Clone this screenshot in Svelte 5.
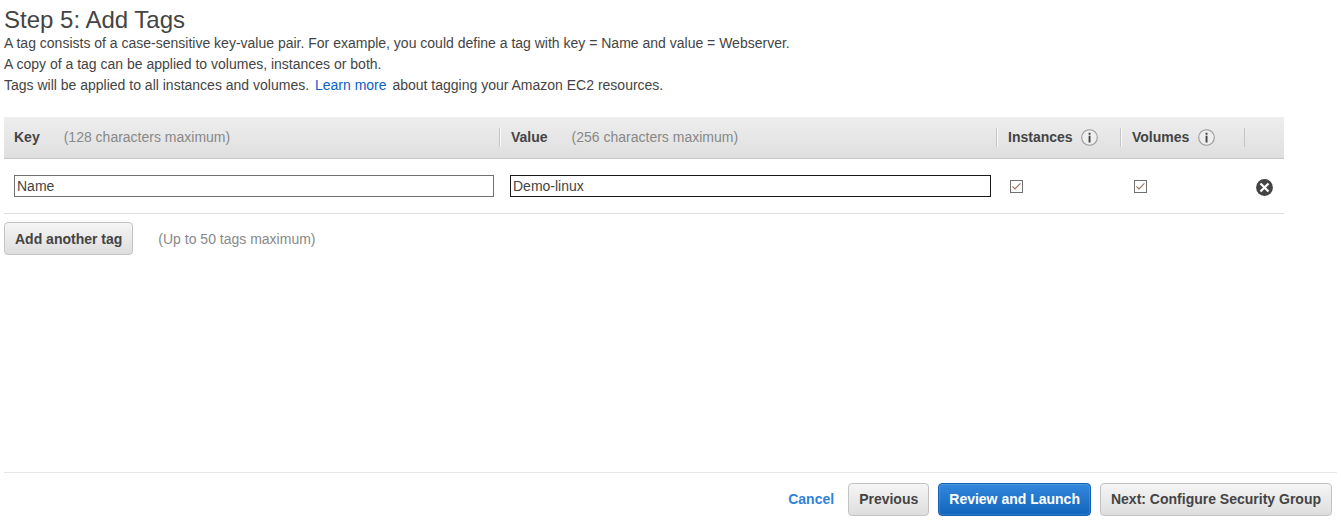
<script>
  let tags = $state([{ key: 'Name', value: 'Demo-linux', instances: true, volumes: true }]);
  const addTag = () => tags.push({ key: '', value: '', instances: true, volumes: true });
  const removeTag = (index) => tags.splice(index, 1);
</script>

{#snippet info()}
  <svg class="info" width="17" height="17" viewBox="0 0 17 17" aria-hidden="true">
    <circle cx="8.5" cy="8.5" r="7.8" fill="#eee" stroke="#999" stroke-width="1.1" />
    <path d="M7.6 3.8h1.9v1.9h-1.9zM7.6 6.8h1.9v6.6h-1.9z" fill="#444" />
  </svg>
{/snippet}

{#snippet check(tag, field)}
  <button
    class="check"
    role="checkbox"
    aria-checked={tag[field]}
    aria-label={field}
    onclick={() => (tag[field] = !tag[field])}
  >
    {#if tag[field]}
      <svg width="11" height="11" viewBox="0 0 11 11" aria-hidden="true">
        <path d="M1.4 5.3 4 7.9 9.4 2.3" fill="none" stroke="#96705f" stroke-width="1.1" />
      </svg>
    {/if}
  </button>
{/snippet}

<div class="page">
  <main>
    <h1>Step 5: Add Tags</h1>
    <div class="intro">
      <p>A tag consists of a case-sensitive key-value pair. For example, you could define a tag with key = Name and value = Webserver.</p>
      <p>A copy of a tag can be applied to volumes, instances or both.</p>
      <p>Tags will be applied to all instances and volumes. <a href="#learn">Learn more</a> about tagging your Amazon EC2 resources.</p>
    </div>

    <div class="table">
      <div class="grid head">
        <div class="cell"><b>Key</b><span class="hint">(128 characters maximum)</span></div>
        <div class="cell"><b>Value</b><span class="hint">(256 characters maximum)</span></div>
        <div class="cell"><b>Instances</b>{@render info()}</div>
        <div class="cell"><b>Volumes</b>{@render info()}</div>
        <div class="cell last"></div>
      </div>
      {#each tags as tag, i}
        <div class="grid row">
          <input aria-label="Key" bind:value={tag.key} />
          <input class="active" aria-label="Value" bind:value={tag.value} />
          {@render check(tag, 'instances')}
          {@render check(tag, 'volumes')}
          <button class="remove" aria-label="Remove tag" onclick={() => removeTag(i)}>
            <svg width="17" height="17" viewBox="0 0 17 17" aria-hidden="true">
              <circle cx="8.5" cy="8.5" r="8.4" fill="#444" />
              <path d="M4.5 4.5l8 8M12.5 4.5l-8 8" stroke="#fff" stroke-width="2.2" />
            </svg>
          </button>
        </div>
      {/each}
    </div>

    <div class="add">
      <button class="btn" onclick={addTag}>Add another tag</button>
      <span class="hint">(Up to 50 tags maximum)</span>
    </div>
  </main>

  <footer>
    <a href="#cancel" class="cancel">Cancel</a>
    <button class="btn">Previous</button>
    <button class="btn primary">Review and Launch</button>
    <button class="btn">Next: Configure Security Group</button>
  </footer>
</div>

<style>
  :global(body) {
    margin: 0;
    background: #fff;
  }
  .page {
    box-sizing: border-box;
    height: 527px;
    padding: 5px 4px 0;
    display: flex;
    flex-direction: column;
    overflow: hidden;
    color: #444;
    font: 14px/21px 'Liberation Sans', Arial, sans-serif;
    white-space: nowrap;
  }
  main {
    flex: 1;
  }
  h1 {
    height: 28px;
    margin: 0;
    font-size: 24px;
    font-weight: 400;
    line-height: 30px;
  }
  p {
    margin: 0;
  }
  a {
    color: #0b61c4;
    text-decoration: none;
  }
  .intro a {
    margin: 0 2px;
  }
  .table {
    width: 1280px;
    margin-top: 21px;
  }
  .grid {
    box-sizing: border-box;
    display: grid;
    grid-template-columns: 496px 497px 124px 124px 39px;
    align-items: center;
  }
  .head {
    height: 42px;
    border-bottom: 1px solid #c8c8c8;
    background: linear-gradient(#eee, #dfdfdf);
  }
  .cell {
    box-sizing: border-box;
    height: 19px;
    padding-left: 10px;
    display: flex;
    align-items: center;
  }
  .cell + .cell {
    margin-left: -1px;
    padding-left: 11px;
    border-left: 1px solid #c5c5c5;
    box-shadow: inset 1px 0 #fafafa;
  }
  .cell.last {
    box-shadow: none;
  }
  .hint {
    margin-left: 24px;
    color: #888;
  }
  .info {
    margin-left: 8.6px;
  }
  .row {
    height: 55px;
    border-bottom: 1px solid #ddd;
  }
  input {
    box-sizing: border-box;
    width: 480px;
    height: 22px;
    margin: 0 0 0 10px;
    padding: 0 2px;
    border: 1px solid #707070;
    border-radius: 0;
    outline: none;
    background: #fff;
    color: #444;
    font: inherit;
  }
  input.active {
    width: 481px;
    border-color: #1a1a1a;
  }
  .check {
    box-sizing: border-box;
    width: 13px;
    height: 13px;
    margin-left: 13px;
    padding: 0;
    display: flex;
    border: 1px solid #707070;
    background: #fff;
  }
  .remove {
    width: 17px;
    height: 17px;
    margin: 2px 0 0 11px;
    padding: 0;
    display: flex;
    border: 0;
    background: none;
  }
  .btn {
    box-sizing: border-box;
    height: 33px;
    margin: 0;
    padding: 0 10px;
    border: 1px solid #c3c3c3;
    border-radius: 4px;
    background: linear-gradient(#f5f5f5, #dedede);
    color: #444;
    font: bold 14px/21px 'Liberation Sans', Arial, sans-serif;
  }
  .primary {
    border-color: #1460b3;
    background: linear-gradient(#3388dd, #1166bb);
    box-shadow: inset 0 0 0 1px rgba(255, 255, 255, 0.12);
    color: #fff;
  }
  .add {
    display: flex;
    align-items: center;
    margin-top: 8px;
  }
  .add .btn {
    padding-top: 2px;
  }
  .add .hint {
    margin-left: 25px;
    padding-top: 2px;
  }
  footer {
    box-sizing: border-box;
    height: 55px;
    padding: 10px 5px 0 0;
    display: flex;
    justify-content: flex-end;
    align-items: flex-start;
    gap: 9px;
    border-top: 1px solid #e6e6e6;
  }
  .cancel {
    margin-right: 5px;
    color: #2f83da;
    font-weight: bold;
    line-height: 33px;
  }
</style>
